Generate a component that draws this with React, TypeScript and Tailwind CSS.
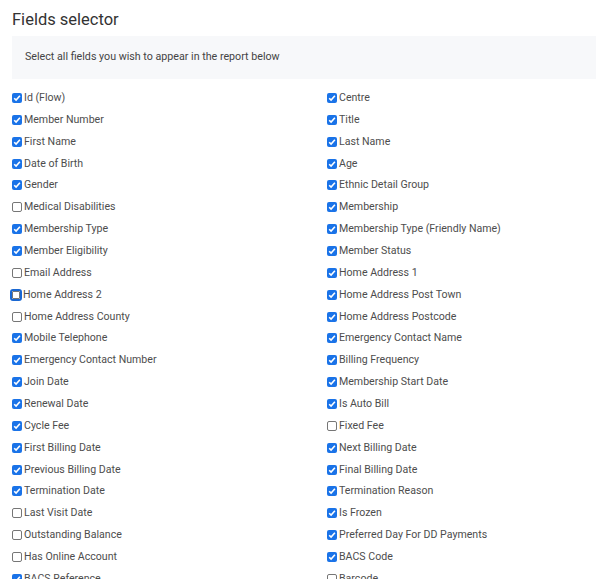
const left: [string, boolean][] = [
  ['Id (Flow)', true],
  ['Member Number', true],
  ['First Name', true],
  ['Date of Birth', true],
  ['Gender', true],
  ['Medical Disabilities', false],
  ['Membership Type', true],
  ['Member Eligibility', true],
  ['Email Address', false],
  ['Home Address 2', false],
  ['Home Address County', false],
  ['Mobile Telephone', true],
  ['Emergency Contact Number', true],
  ['Join Date', true],
  ['Renewal Date', true],
  ['Cycle Fee', true],
  ['First Billing Date', true],
  ['Previous Billing Date', true],
  ['Termination Date', true],
  ['Last Visit Date', false],
  ['Outstanding Balance', false],
  ['Has Online Account', false],
  ['BACS Reference', true],
]

const right: [string, boolean][] = [
  ['Centre', true],
  ['Title', true],
  ['Last Name', true],
  ['Age', true],
  ['Ethnic Detail Group', true],
  ['Membership', true],
  ['Membership Type (Friendly Name)', true],
  ['Member Status', true],
  ['Home Address 1', true],
  ['Home Address Post Town', true],
  ['Home Address Postcode', true],
  ['Emergency Contact Name', true],
  ['Billing Frequency', true],
  ['Membership Start Date', true],
  ['Is Auto Bill', true],
  ['Fixed Fee', false],
  ['Next Billing Date', true],
  ['Final Billing Date', true],
  ['Termination Reason', true],
  ['Is Frozen', true],
  ['Preferred Day For DD Payments', true],
  ['BACS Code', true],
  ['Barcode', false],
]

function Box({ checked, focused }: { checked: boolean; focused?: boolean }) {
  if (focused) {
    return (
      <span className="-ml-[2px] mr-[1px] flex h-[12px] w-[12px] shrink-0 items-center justify-center rounded-[3px] border-2 border-[#1967d2] bg-white">
        <span className="h-[8px] w-[8px] rounded-[1px] border border-[#767676]" />
      </span>
    )
  }
  if (checked) {
    return (
      <span className="mr-[2px] flex h-[10px] w-[10px] shrink-0 items-center justify-center rounded-[2px] bg-[#1a73e8]">
        <svg viewBox="0 0 10 10" className="h-[10px] w-[10px]">
          <path d="M2.2 5.2 L4.1 7.1 L7.9 2.8" fill="none" stroke="white" strokeWidth="1.6" />
        </svg>
      </span>
    )
  }
  return <span className="mr-[2px] h-[10px] w-[10px] shrink-0 rounded-[2px] border border-[#767676] bg-white" />
}

function Column({ items }: { items: [string, boolean][] }) {
  return (
    <div className="flex flex-col">
      {items.map(([label, checked]) => (
        <label key={label} className="flex h-[21.86px] items-center text-[10.6px] text-[#4d4d4d]">
          <Box checked={checked} focused={label === 'Home Address 2'} />
          <span>{label}</span>
        </label>
      ))}
    </div>
  )
}

export default function App() {
  return (
    <div className="h-[579px] overflow-hidden bg-white pl-3 font-['Roboto',sans-serif]">
      <h2 className="pt-[9px] text-[16.5px] leading-[22px] text-[#333]">Fields selector</h2>
      <div className="mt-[5px] flex h-[43px] items-center bg-[#f7f8fa] px-[13px] text-[10.7px] text-[#444]">
        Select all fields you wish to appear in the report below
      </div>
      <div className="mt-[8px] grid grid-cols-[315px_1fr]">
        <Column items={left} />
        <Column items={right} />
      </div>
    </div>
  )
}
